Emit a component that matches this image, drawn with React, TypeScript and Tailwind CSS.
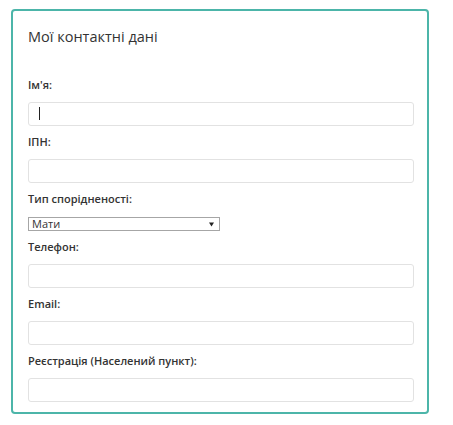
import React from "react";

const labelCls = "block text-[11px] leading-4 font-semibold text-[#333]";
const inputCls = "block w-[386px] h-6 rounded-[3px] border border-[#e2e2e2] bg-white px-2 text-[12px] outline-none";

function Field({ label, first = false, focused = false }: { label: string; first?: boolean; focused?: boolean }) {
  return (
    <div className={first ? "" : "mt-2"}>
      <label className={`${labelCls} mb-[9px]`}>{label}</label>
      <div className="relative w-[386px]">
        <input type="text" className={`${inputCls} ${focused ? "border-[#c6c6c6]" : ""}`} />
        {focused && <span className="absolute left-[11px] top-[5px] w-px h-[13px] bg-[#222]" />}
      </div>
    </div>
  );
}

export default function App() {
  return (
    <div className="min-h-screen bg-white pt-[9px] pl-[11px]" style={{ fontFamily: '"Open Sans", "Noto Sans", sans-serif' }}>
      {/* Contact card */}
      <div className="w-[418px] h-[405px] rounded-[4px] border-2 border-[#4cb5a9] pt-[16px] pl-[15px]">
        <h2 className="text-[14.5px] leading-5 text-[#333] mb-[30px]">Мої контактні дані</h2>

        <Field label="Ім'я:" first focused />
        <Field label="ІПН:" />

        <div className="mt-2">
          <label className={`${labelCls} mb-[10px]`}>Тип спорідненості:</label>
          <div className="relative w-[192px]">
            <select className="block w-[192px] h-[14px] appearance-none border border-[#a6a6a6] bg-white pl-[3px] text-[11px] leading-[12px] text-[#333] outline-none rounded-none">
              <option>Мати</option>
              <option>Батько</option>
            </select>
            <svg className="absolute right-[6px] top-[5px]" width="5" height="5" viewBox="0 0 6 5">
              <path d="M0 0h6L3 5z" fill="#222" />
            </svg>
          </div>
        </div>

        <Field label="Телефон:" />
        <Field label="Email:" />
        <Field label="Реєстрація (Населений пункт):" />
      </div>
    </div>
  );
}
